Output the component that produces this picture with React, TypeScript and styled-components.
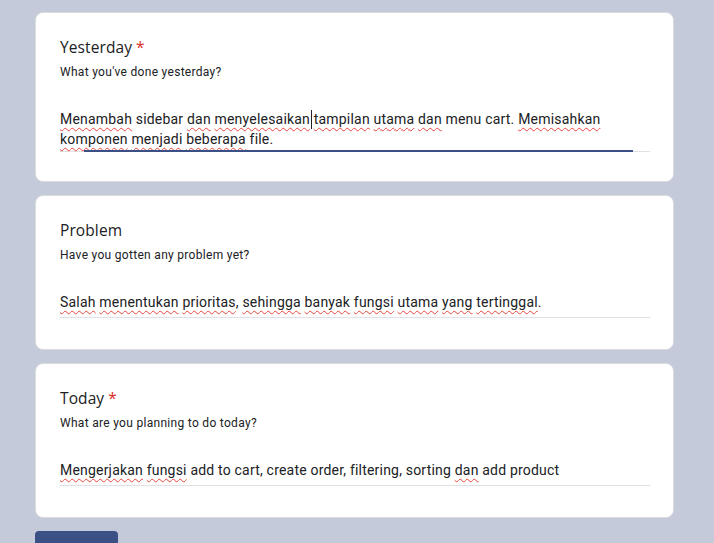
import React from "react";
import styled, { createGlobalStyle } from "styled-components";

const Global = createGlobalStyle`
  html, body { margin: 0; padding: 0; background: #c5cada; }
  body { font-family: Roboto, "Liberation Sans", Arial, sans-serif; }
`;

const Page = styled.div`
  padding: 12px 0 0 35px;
  width: 639px;
  height: 531px;
  overflow: hidden;
  display: flex;
  flex-direction: column;
  gap: 13px;
`;

const Card = styled.div<{ $multiline?: boolean }>`
  background: #fff;
  border: 1px solid #dadce0;
  border-radius: 8px;
  padding: 22px 24px ${(p) => (p.$multiline ? "29px" : "31px")} 24px;
  display: flex;
  flex-direction: column;
`;

const Title = styled.div`
  font-family: "Open Sans", Roboto, sans-serif;
  font-size: 15.5px;
  line-height: 24px;
  color: #202124;
  letter-spacing: 0.1px;
`;

const Star = styled.span`
  color: #d93025;
  margin-left: 4px;
`;

const Desc = styled.div`
  margin-top: 4px;
  font-size: 12px;
  line-height: 18px;
  color: #202124;
  letter-spacing: 0.3px;
`;

const Answer = styled.div<{ $multiline?: boolean }>`
  margin-top: 28px;
  width: 590px;
  font-size: 14px;
  line-height: 20px;
  color: #202124;
  padding-bottom: ${(p) => (p.$multiline ? "2px" : "5px")};
  border-bottom: 1px solid #e0e0e0;
  position: relative;
  letter-spacing: 0.2px;
`;

const FocusLine = styled.div`
  position: absolute;
  left: 24px;
  right: 17px;
  bottom: -1px;
  height: 2px;
  background: #3b5185;
`;

const Sp = styled.span`
  text-decoration: underline wavy #e8453c;
  text-decoration-thickness: 1px;
  text-underline-offset: 3px;
  text-decoration-skip-ink: none;
`;

const CaretSpace = styled.span`
  position: relative;
  &::after {
    content: "";
    position: absolute;
    left: 1px;
    top: -1px;
    width: 1px;
    height: 19px;
    background: #202124;
  }
`;

const Button = styled.div`
  width: 83px;
  height: 24px;
  background: #3b5185;
  border-radius: 4px;
  flex-shrink: 0;
`;

export default function App() {
  return (
    <>
      <Global />
      <Page>
        <Card $multiline>
          <Title>
            Yesterday<Star>*</Star>
          </Title>
          <Desc>What you've done yesterday?</Desc>
          <Answer $multiline>
            <Sp>Menambah</Sp> sidebar <Sp>dan</Sp> <Sp>menyelesaikan</Sp>
            <CaretSpace> </CaretSpace>
            <Sp>tampilan</Sp> <Sp>utama</Sp> <Sp>dan</Sp> menu cart. <Sp>Memisahkan</Sp>{" "}
            <Sp>komponen</Sp> <Sp>menjadi</Sp> <Sp>beberapa</Sp> file.
            <FocusLine />
          </Answer>
        </Card>
        <Card>
          <Title>Problem</Title>
          <Desc>Have you gotten any problem yet?</Desc>
          <Answer>
            <Sp>Salah</Sp> <Sp>menentukan</Sp> <Sp>prioritas</Sp>, <Sp>sehingga</Sp>{" "}
            <Sp>banyak</Sp> <Sp>fungsi</Sp> <Sp>utama</Sp> <Sp>yang</Sp> <Sp>tertinggal</Sp>.
          </Answer>
        </Card>
        <Card>
          <Title>
            Today<Star>*</Star>
          </Title>
          <Desc>What are you planning to do today?</Desc>
          <Answer>
            <Sp>Mengerjakan</Sp> <Sp>fungsi</Sp> add to cart, create order, filtering, sorting{" "}
            <Sp>dan</Sp> add product
          </Answer>
        </Card>
        <Button />
      </Page>
    </>
  );
}
